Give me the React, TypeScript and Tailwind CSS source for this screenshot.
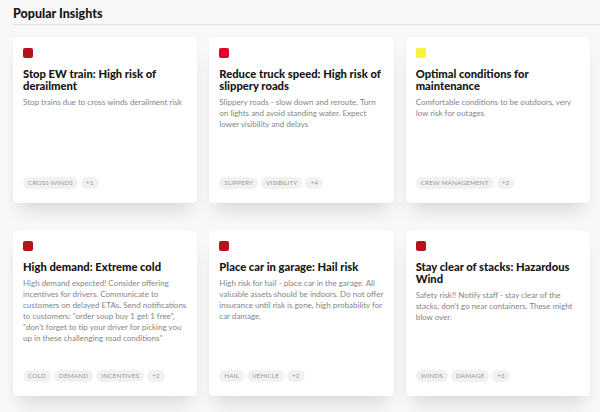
import React from "react";

type Insight = {
  color: string;
  title: string;
  body: string;
  tags: string[];
  more: number;
};

const insights: Insight[] = [
  {
    color: "bg-[#b5121b]",
    title: "Stop EW train: High risk of derailment",
    body: "Stop trains due to cross winds derailment risk",
    tags: ["Cross winds"],
    more: 1,
  },
  {
    color: "bg-[#e8002d]",
    title: "Reduce truck speed: High risk of slippery roads",
    body: "Slippery roads - slow down and reroute. Turn on lights and avoid standing water. Expect lower visibility and delays",
    tags: ["Slippery", "Visibility"],
    more: 4,
  },
  {
    color: "bg-[#f3f73c]",
    title: "Optimal conditions for maintenance",
    body: "Comfortable conditions to be outdoors, very low risk for outages",
    tags: ["Crew management"],
    more: 2,
  },
  {
    color: "bg-[#b5121b]",
    title: "High demand: Extreme cold",
    body: 'High demand expected! Consider offering incentives for drivers. Communicate to customers on delayed ETAs. Send notifications to customers: "order soup buy 1 get 1 free", "don\'t forget to tip your driver for picking you up in these challenging road conditions"',
    tags: ["Cold", "Demand", "Incentives"],
    more: 2,
  },
  {
    color: "bg-[#b5121b]",
    title: "Place car in garage: Hail risk",
    body: "High risk for hail - place car in the garage. All valuable assets should be indoors. Do not offer insurance until risk is gone, high probability for car damage.",
    tags: ["Hail", "Vehicle"],
    more: 2,
  },
  {
    color: "bg-[#b5121b]",
    title: "Stay clear of stacks: Hazardous Wind",
    body: "Safety risk!! Notify staff - stay clear of the stacks, don't go near containers. These might blow over.",
    tags: ["Winds", "Damage"],
    more: 3,
  },
];

function Tag({ label }: { label: string }) {
  return (
    <span className="rounded-full bg-[#f1f1f1] px-[5px] h-[12px] flex items-center text-[6.4px] uppercase text-[#9a9a9a] tracking-[0.02em]">
      {label}
    </span>
  );
}

function InsightCard({ item }: { item: Insight }) {
  return (
    <div className="h-[166px] bg-white rounded-[4px] shadow-[0_14px_18px_-6px_rgba(0,0,0,0.12),0_0_2px_rgba(0,0,0,0.06)] pt-[11px] px-[10px] pb-[14px] flex flex-col">
      <div className={`w-[10px] h-[10px] rounded-[2px] ${item.color}`} />
      <h3 className="mt-[10px] text-[11.2px] leading-[12px] font-black text-[#151515]">
        {item.title}
      </h3>
      <p className="mt-[5px] text-[8px] leading-[11px] text-[#858585]">{item.body}</p>
      <div className="mt-auto flex gap-[3px]">
        {item.tags.map((t) => (
          <Tag key={t} label={t} />
        ))}
        <Tag label={`+${item.more}`} />
      </div>
    </div>
  );
}

export default function App() {
  return (
    <div
      className="w-[600px] h-[412px] overflow-hidden bg-[#f8f8f8] pl-[13px] pr-[10px]"
      style={{ fontFamily: "Lato, 'Open Sans', sans-serif" }}
    >
      <div className="h-[25px] border-b border-[#e2e2e2] mr-[-10px] flex items-center pt-[4px]">
        <h2 className="text-[12.5px] font-black text-[#161616] leading-none">Popular Insights</h2>
      </div>
      <div className="mt-[12px] grid grid-cols-3 gap-x-[12px] gap-y-[27px]">
        {insights.map((item) => (
          <InsightCard key={item.title} item={item} />
        ))}
      </div>
    </div>
  );
}
